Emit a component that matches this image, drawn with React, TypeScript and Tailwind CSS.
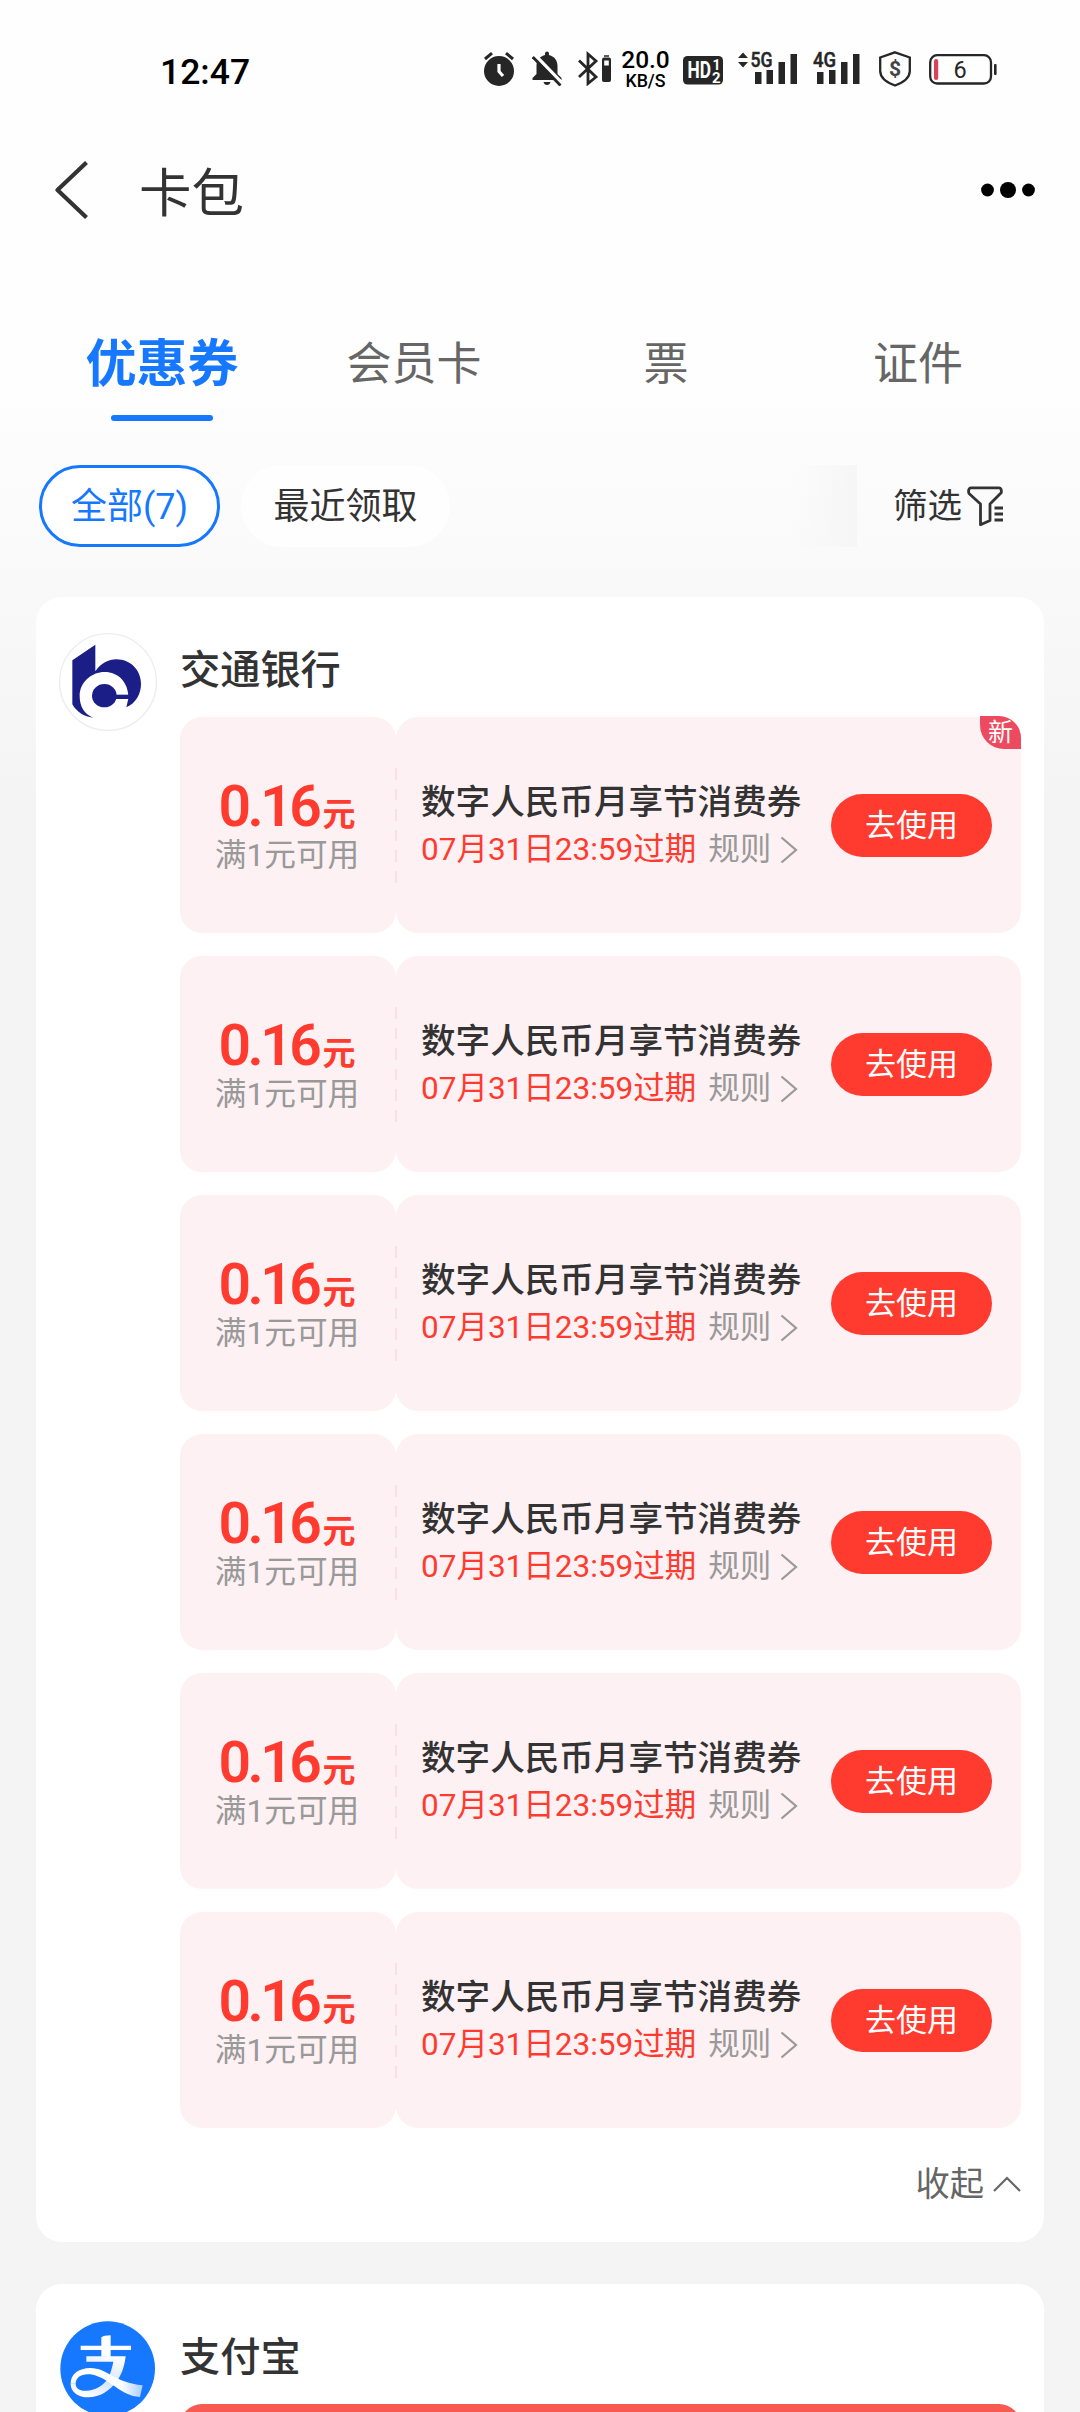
import React from "react";

const INK = "#262626";

function StatusBar() {
  return (
    <div className="flex h-[138px] items-start pt-[50px] pl-[160px] text-black">
      <div className="mt-[1px] w-[324px] text-[35.500px] leading-[42px] font-medium">12:47</div>
      <svg className="h-9 w-[30px]" viewBox="0 0 30 36" fill={INK}>
        <circle cx="15" cy="21" r="15" />
        <path d="M1 9 8 3.2M29 9 22 3.2" stroke={INK} strokeWidth="3" />
        <path d="M15 14v7.5l4 4.5" stroke="#fff" strokeWidth="3.2" fill="none" />
      </svg>
      <svg className="ml-[18px] h-9 w-[30px]" viewBox="0 0 30 36" fill={INK}>
        <path d="M13 5V3.500a2 2 0 0 1 4 0V5c6 1.500 8.500 6 8.500 11v8l4 4v2H.5v-2l4-4v-8C4.500 11 7 6.500 13 5z" />
        <path d="M11.500 32h7c-.5 2-1.700 3-3.500 3s-3-1-3.500-3z" />
        <path d="M2.500 4.500 31 34" stroke="#fff" strokeWidth="3.500" />
        <path d="M.8 7 28.500 35.500" stroke={INK} strokeWidth="2.800" />
      </svg>
      <svg className="ml-4 h-9 w-[34px]" viewBox="0 0 34 36" fill="none" stroke={INK} strokeWidth="2.800">
        <path d="M1 10.500 18 27 10 33.500V4l8 7L1 27" />
        <path d="M26 7.500h5a2 2 0 0 1 2 2V30a2 2 0 0 1-2 2h-5a2 2 0 0 1-2-2V9.500a2 2 0 0 1 2-2z" fill={INK} stroke="none" />
        <path d="M26.200 10.500h4.600v5h-4.600z" fill="#fff" stroke="none" />
        <path d="M26 6h5" strokeWidth="1.500" />
      </svg>
      <div className="-mt-[2px] ml-[7px] flex w-[53px] flex-col items-center font-medium">
        <span className="text-[24.500px] leading-[24px]">20.0</span>
        <span className="text-[17.800px] leading-[18px]">KB/S</span>
      </div>
      <svg className="ml-[11px] h-9 w-10 overflow-visible font-bold" viewBox="0 0 40 36">
        <rect y="6" width="40" height="28.500" rx="4.500" fill={INK} />
        <text x="4.500" y="28.300" fontSize="23" textLength="23.500" lengthAdjust="spacingAndGlyphs" fill="#fff">HD</text>
        <text x="29.500" y="19.500" fontSize="14" fill="#fff">1</text>
        <text x="29" y="32.500" fontSize="15" fill="#fff">2</text>
      </svg>
      <svg className="ml-[15px] h-9 w-[59px] overflow-visible font-medium" viewBox="0 0 59 36" fill={INK}>
        <path d="M5 2.500 10 8H0zM5 17.500 10 12H0z" />
        <text x="12.500" y="17.200" fontSize="21" textLength="22" lengthAdjust="spacingAndGlyphs" stroke={INK} strokeWidth=".5">5G</text>
        <path d="M17 22h6.500v12H17zM28.500 20H35v14h-6.500zM40.500 12H47v22h-6.500zM52.500 4H59v30h-6.500z" />
      </svg>
      <svg className="ml-4 h-9 w-[47px] overflow-visible font-medium" viewBox="0 0 47 36" fill={INK}>
        <text x="0" y="17.200" fontSize="21" textLength="23" lengthAdjust="spacingAndGlyphs" stroke={INK} strokeWidth=".5">4G</text>
        <path d="M4 22h6.500v12H4zM16 20h6.500v14H16zM28 12h6.500v22H28zM40 4h6.500v30H40z" />
      </svg>
      <svg className="ml-[18px] h-[37px] w-[34px] font-bold" viewBox="0 0 34 37">
        <path d="M17 2.300 31.800 7.500v13.500c0 6.500-6.500 11.500-14.800 14.500C8.700 32.500 2.200 27.500 2.200 21V7.500z" fill="none" stroke={INK} strokeWidth="2.300" />
        <text x="17" y="25.800" fontSize="21" textAnchor="middle" fill="#444">$</text>
      </svg>
      <svg className="ml-[17px] h-9 w-[68px]" viewBox="0 0 68 36">
        <rect x="1.200" y="5.200" width="60.800" height="28.300" rx="7" fill="none" stroke={INK} strokeWidth="2.300" />
        <rect x="65" y="14" width="2.600" height="11" rx="1" fill={INK} />
        <rect x="5" y="9" width="4.200" height="21" rx="2" fill="#dc4057" />
        <text x="31" y="28" fontSize="23.500" textAnchor="middle" fill={INK}>6</text>
      </svg>
    </div>
  );
}

function Header() {
  return (
    <header className="flex h-[104px] items-center pr-[45px] pl-[54px]">
      <svg className="h-[58px] w-[36px]" viewBox="0 0 36 58" fill="none" stroke="#333" strokeWidth="4.200" strokeLinejoin="round">
        <path d="M32.500 1.500 3.500 29l29 27.500" />
      </svg>
      <h1 className="mt-[7px] ml-[49px] flex-1 text-[52.500px] leading-[60px] text-[#333]">卡包</h1>
      <svg className="h-4 w-[54px]" viewBox="0 0 54 16">
        <circle cx="6.500" cy="8" r="6.400" />
        <circle cx="27" cy="8" r="8" />
        <circle cx="47.500" cy="8" r="6.400" />
      </svg>
    </header>
  );
}

const tabs = ["优惠券", "会员卡", "票", "证件"];

function Tabs() {
  return (
    <nav className="mt-[84px] grid h-[95px] grid-cols-4 px-9 text-center">
      {tabs.map((tab, i) =>
        i === 0 ? (
          <div key={tab} className="flex flex-col items-center">
            <span className="text-[51px] leading-[78px] font-bold text-[#1677ff]">{tab}</span>
            <span className="mt-[11px] h-[6px] w-[102px] rounded-full bg-[#1677ff]" />
          </div>
        ) : (
          <span key={tab} className="text-[45px] leading-[77px] text-[#666]">{tab}</span>
        ),
      )}
    </nav>
  );
}

function Filters() {
  return (
    <div className="mt-[44px] flex h-[82px] items-center text-[36px]">
      <div className="ml-[39px] flex h-full w-[181px] items-center justify-center rounded-full border-[3px] border-[#1677ff] bg-white pt-[2px] text-[#1677ff]">
        <span>全部(7)</span>
      </div>
      <div className="ml-[21px] flex h-full w-[209px] items-center justify-center rounded-full bg-[#fefefe] pt-[2px] text-[#333]">最近领取</div>
      <div className="ml-auto h-full w-[66px] bg-linear-to-r from-transparent to-[#f6f6f6]" />
      <div className="mr-[77px] ml-[36px] flex items-center text-[#333]">
        <span className="pt-[2px] text-[34.500px]">筛选</span>
        <svg className="ml-[5px] h-10 w-[36px]" viewBox="0 0 36 40" fill="none" stroke="#333" strokeWidth="2.800" strokeLinejoin="round">
          <path d="M4 1.800h28c2 0 2.700 2.500 2.200 5L23 18v16.500l-9.500 4.200V18L2 7.500C1 5 1.800 1.800 4 1.800z" />
          <path d="M27.500 22H36M27.500 28H36M27.500 34H36" strokeWidth="3" />
        </svg>
      </div>
    </div>
  );
}

function Coupon({ isNew }: { isNew: boolean }) {
  return (
    <div className="relative flex h-[216px] w-[841px]">
      <div className="flex w-[216px] flex-col items-center rounded-[22px] bg-[#fef1f3] pt-[64px] pr-[2px]">
        <div className="flex h-[52px] items-baseline text-[#ff3b30]">
          <span className="text-[57px] leading-[52px] font-semibold tracking-[-3.500px]">0.16</span>
          <span className="ml-[4px] text-[33px] leading-[52px] font-bold">元</span>
        </div>
        <div className="mt-[3px] text-[31.700px] leading-[40px] text-[#999]">满1元可用</div>
      </div>
      <div className="flex flex-1 rounded-[22px] bg-[#fef1f3] pl-[25px]">
        <div className="w-[410px] pt-[63px] whitespace-nowrap">
          <div className="text-[34.600px] leading-[44px] font-medium text-[#333]">数字人民币月享节消费券</div>
          <div className="mt-[3px] flex items-center text-[31.500px] leading-[46px]">
            <span className="text-[#ff3b30]">07月31日23:59过期</span>
            <span className="ml-[12px] text-[#999]">规则</span>
            <svg className="ml-[9px] h-7 w-[18px]" viewBox="0 0 18 28" fill="none" stroke="#999" strokeWidth="2.200">
              <path d="M1.500 1.500 16 14 1.500 26.500" />
            </svg>
          </div>
        </div>
        <button className="mt-[77px] h-[63px] w-[161px] rounded-full bg-[#ff3b30] text-[31px] leading-[63px] text-white">去使用</button>
      </div>
      <div className="absolute top-[51px] left-[215px] flex flex-col gap-[9px]">
        {[0, 1, 2, 3, 4, 5].map((n) => (
          <span key={n} className="h-[11.600px] w-[2px] bg-[#fbdfe2]" />
        ))}
      </div>
      {isNew && (
        <div className="absolute -top-px right-0 h-[33px] w-[41px] rounded-tr-[22px] rounded-bl-[24px] bg-[#ee4a5f] text-center text-[25px] leading-[34px] text-white">新</div>
      )}
    </div>
  );
}

function BankLogo() {
  return (
    <svg className="h-[98px] w-[98px]" viewBox="0 0 294 294">
      <circle cx="147" cy="147" r="145" fill="#fff" stroke="#ededed" strokeWidth="4" />
      <g fill="#1b1e86">
        <path d="M40 82 109 35v80c16-24 40-36 63-36 43 0 74 33 74 73 0 32-16 58-44 71l6-26v-9c-2-42-32-71-70-71-42 0-76 32-76 72 0 32 14 54 40 65-26-2-50-18-62-40z" />
        <ellipse cx="136" cy="188" rx="37" ry="35" />
        <path d="M165 185h46v13h-46z" />
      </g>
    </svg>
  );
}

function AlipayLogo() {
  return (
    <svg className="mt-px ml-px h-[96px] w-[96px]" viewBox="0 0 288 288">
      <defs>
        <linearGradient id="ribbon" x1="0" x2="1">
          <stop offset="0" stopColor="#fff" />
          <stop offset=".7" stopColor="#fff" />
          <stop offset="1" stopColor="#a9cdff" />
        </linearGradient>
        <linearGradient id="stem" x1=".8" y1="0" x2=".3" y2="1">
          <stop offset="0" stopColor="#fff" />
          <stop offset=".55" stopColor="#d3e5ff" />
          <stop offset="1" stopColor="#fff" />
        </linearGradient>
      </defs>
      <circle cx="143" cy="143" r="142" fill="#1677ff" />
      <path d="M79 106H197C193 140 182 165 172 178 150 210 120 229 85 229 50 229 32 210 32 188H47C47 203 60 210 78 209 105 208 130 195 145 170 152 157 156 140 160 122H79z" fill="url(#stem)" />
      <path d="M62 74h62V49c4-4 14-6 28-6v31h61v13h-61v20h-28V87H62z" fill="#fff" />
      <path d="M32 188C32 160 55 141 92 141 140 141 165 185 248 193L240 228C180 226 150 170 92 160 65 157 47 168 47 188z" fill="url(#ribbon)" />
    </svg>
  );
}

function MerchantCard({ logo, name, children, className }: { logo: React.ReactNode; name: string; children: React.ReactNode; className: string }) {
  return (
    <section className={"mx-9 flex rounded-[26px] bg-white " + className}>
      <div className="w-[144px] shrink-0 pt-9 pl-[23px]">{logo}</div>
      <div>
        <h2 className="mt-[45px] mb-[17px] h-[58px] text-[40.200px] leading-[58px] font-medium text-[#333]">{name}</h2>
        {children}
      </div>
    </section>
  );
}

export default function App() {
  return (
    <main className="h-[2412px] w-[1080px] overflow-hidden bg-[#f4f4f4] bg-[linear-gradient(#fefefe_0px,#fefefe_380px,#f4f4f4_800px)] font-['Roboto','Noto_Sans_CJK_SC',sans-serif]">
      <StatusBar />
      <Header />
      <Tabs />
      <Filters />
      <MerchantCard className="mt-[50px] h-[1645px]" logo={<BankLogo />} name="交通银行">
        <div className="flex flex-col gap-[23px]">
          {[0, 1, 2, 3, 4, 5].map((n) => (
            <Coupon key={n} isNew={n === 0} />
          ))}
        </div>
        <div className="mt-[32px] flex items-center justify-end text-[34.300px] leading-[48px] text-[#666]">
          <span>收起</span>
          <svg className="ml-[9px] h-4 w-[28px]" viewBox="0 0 28 16" fill="none" stroke="#666" strokeWidth="2.200">
            <path d="M1 15 14 2l13 13" />
          </svg>
        </div>
      </MerchantCard>
      <MerchantCard className="mt-[42px] h-[400px]" logo={<AlipayLogo />} name="支付宝">
        <div className="h-[216px] w-[841px] rounded-[22px] bg-[#f75a50]" />
      </MerchantCard>
    </main>
  );
}
